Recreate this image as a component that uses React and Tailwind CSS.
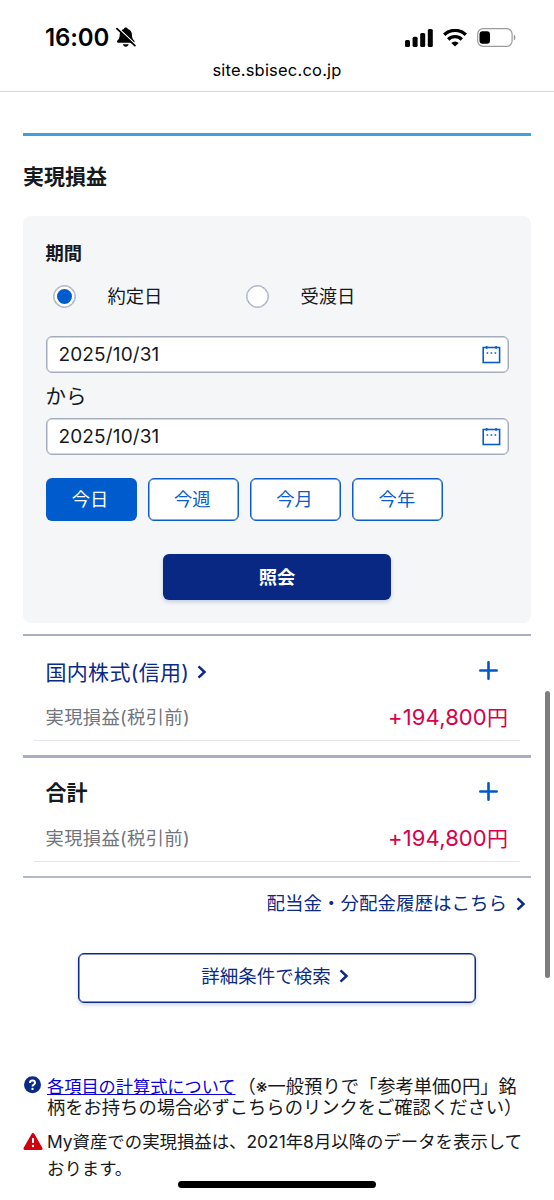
import React from "react";

const JP = "font-['Inter','Noto_Sans_CJK_JP',sans-serif]";

function MutedBell() {
  return (
    <svg className="h-[21px] w-5" viewBox="0 0 20 21">
      <path
        d="M9.800 .6c1 0 1.700.6 1.900 1.400 2.700.8 4.200 2.900 4.200 5.600 0 3.300.8 4.600 2.200 5.900.9.9.5 2.200-.8 2.200H2.200c-1.300 0-1.700-1.300-.8-2.200C2.900 12.200 3.700 10.900 3.700 7.600 3.700 4.900 5.200 2.800 7.900 2 8.100 1.200 8.800.6 9.800.6z"
        fill="#000"
      />
      <path d="M7 17.200h5.600c-.2 1.600-1.300 2.500-2.800 2.500S7.200 18.800 7 17.200z" fill="#000" />
      <path d="M2 .8L19.800 17.800" stroke="#fff" strokeWidth="1.300" />
      <path d="M.9 1.700L18.900 18.700" stroke="#000" strokeWidth="1.700" strokeLinecap="round" />
    </svg>
  );
}

function Signal() {
  return (
    <svg className="h-[18px] w-7" viewBox="0 0 28 18" fill="#000">
      <rect x="0" y="11" width="5" height="7" rx="1.500" />
      <rect x="7.600" y="7.800" width="5" height="10.200" rx="1.500" />
      <rect x="15.200" y="4" width="5" height="14" rx="1.500" />
      <rect x="22.800" y="0" width="5" height="18" rx="1.500" />
    </svg>
  );
}

function Wifi() {
  return (
    <svg className="h-[18px] w-6" viewBox="0 0 24 18" fill="none" stroke="#000" strokeWidth="3.300">
      <path d="M1.200 5.800a15.400 15.400 0 0 1 21.600 0" />
      <path d="M5.200 10.500a9.700 9.700 0 0 1 13.600 0" />
      <path d="M12 17.400l-3.700-3.500a5.300 5.300 0 0 1 7.400 0z" fill="#000" stroke="none" />
    </svg>
  );
}

function Battery() {
  return (
    <svg className="h-[19px] w-[39px]" viewBox="0 0 39 19">
      <rect x=".7" y=".7" width="34.400" height="17.600" rx="5.300" fill="none" stroke="#9b9b9b" strokeWidth="1.200" />
      <rect x="2.500" y="3.200" width="10.500" height="12.600" rx="3" fill="#000" />
      <path d="M36.800 6.500c2.200 1 2.200 5 0 6z" fill="#9b9b9b" />
    </svg>
  );
}

function Chevron({ className }) {
  return (
    <svg className={className} viewBox="0 0 10 14" fill="none" stroke="#0a2a86" strokeWidth="2.500">
      <path d="M1.500 1.300L7.500 7l-6 5.700" />
    </svg>
  );
}

function Calendar() {
  return (
    <svg className="h-[19px] w-[19px]" viewBox="0 0 19 19" fill="none" stroke="#0b5cc8" strokeWidth="1.600">
      <rect x="1.200" y="2.500" width="16.400" height="15" />
      <path d="M4.700 .9v2.800M14.100 .9v2.800" />
      <path d="M4.600 8h1.600M8.600 8h1.600M12.600 8h1.600" />
    </svg>
  );
}

function Plus() {
  return (
    <svg className="mb-[3px] h-[19px] w-[19px]" viewBox="0 0 19 19" stroke="#0058c8" strokeWidth="2.600" strokeLinecap="round">
      <path d="M9.500 1.300v16.400M1.300 9.500h16.400" />
    </svg>
  );
}

function DateField() {
  return (
    <div className="flex h-[37px] w-[463px] items-center justify-between rounded-md border border-[#a5adbd] bg-white pl-3 pr-[7px] shadow-[inset_0_0_0_0.5px_#a5adbd]">
      <span className="text-[19px] leading-none tracking-[0.140px]">2025/10/31</span>
      <Calendar />
    </div>
  );
}

function Radio({ checked, label }) {
  return (
    <label className="flex w-[193px] items-center">
      <span className="flex h-[23px] w-[23px] items-center justify-center rounded-full border border-[#a5adc4] bg-white shadow-[inset_0_0_0_0.5px_#a5adc4]">
        {checked && <span className="h-[15px] w-[15px] rounded-full bg-[#005ccd]" />}
      </span>
      <span className="ml-8 text-[18.300px]">{label}</span>
    </label>
  );
}

function RangeButton({ children }) {
  return (
    <button className="h-[43px] w-[91px] rounded-md border border-[#0b5cc8] bg-white pr-0.5 shadow-[inset_0_0_0_0.5px_#0b5cc8]">
      {children}
    </button>
  );
}

function ResultBlock({ title, link }) {
  return (
    <section className="flex flex-col px-[11px]">
      <div className="flex h-[70px] items-center justify-between pr-[22px] pl-[11.500px]">
        {link ? (
          <a className="flex items-center text-[21px] tracking-[0.300px] text-[#0a2a86]">
            {title}
            <Chevron className="ml-2 h-3.5 w-2.5" />
          </a>
        ) : (
          <h2 className="pb-0.5 text-[21px] font-bold">{title}</h2>
        )}
        <Plus />
      </div>
      <div className="flex h-[34px] items-start justify-between border-b border-[#e3e6ea] pr-3 pl-[11.500px]">
        <span className="text-[18.300px] leading-[20px] tracking-[0.350px] text-[#70757d]">実現損益(税引前)</span>
        <span className="text-[22px] leading-[20px] tracking-[0.120px] text-[#d9004c]">
          +194,800<span className="text-[21px]">円</span>
        </span>
      </div>
    </section>
  );
}

export default function App() {
  return (
    <div className={`relative h-[1200px] w-[554px] overflow-hidden bg-white leading-none whitespace-nowrap text-[#16191d] ${JP}`}>
      <header className="h-[92px] border-b border-[#d8d8d9] text-black">
        <div className="flex h-[60px] items-start justify-between pt-[27px] pl-[45px] pr-[38px]">
          <div className="flex items-center gap-[7px]">
            <span className="pt-px text-[24px] leading-5 font-semibold tracking-[-0.100px]">16:00</span>
            <MutedBell />
          </div>
          <div className="flex items-center gap-2.5 pt-px">
            <Signal />
            <Wifi />
            <Battery />
          </div>
        </div>
        <div className="text-center text-[16.500px] leading-5 tracking-[0.200px]">site.sbisec.co.jp</div>
      </header>

      <main className="flex flex-col px-[23px] pt-[41px]">
        <div className="h-[3px] bg-[#419fd9]" />
        <h1 className="flex h-20 items-center text-[21px] font-bold">実現損益</h1>

        <section className="flex h-[407px] flex-col rounded-lg bg-[#f4f6f8] pt-[27px] pl-[22.500px]">
          <h2 className="text-[18.300px] leading-5 font-bold">期間</h2>
          <div className="flex h-[73px] items-center pb-1.5 pl-[7px]">
            <Radio checked label="約定日" />
            <Radio label="受渡日" />
          </div>
          <DateField />
          <div className="flex h-[45px] items-center pt-1 text-[20.500px]">から</div>
          <DateField />
          <div className="mt-[22.500px] flex gap-[11.300px] text-[18.300px] text-[#0b5cc8]">
            <button className="h-[43px] w-[91px] rounded-md bg-[#005ccd] pr-0.5 text-white">今日</button>
            <RangeButton>今週</RangeButton>
            <RangeButton>今月</RangeButton>
            <RangeButton>今年</RangeButton>
          </div>
          <button className="mt-[33.500px] ml-[117.500px] h-[46px] w-[228px] rounded-md bg-[#082883] text-[18.300px] font-bold text-white shadow-[0_2px_4px_rgba(8,40,131,0.2)]">
            照会
          </button>
        </section>

        <div className="mt-[11px] mb-px h-[2px] bg-[#a9b1bf]" />
        <ResultBlock title="国内株式(信用)" link />
        <div className="mt-[14px] h-[3px] bg-[#a8aec3]" />
        <ResultBlock title="合計" />
        <div className="mt-[14px] h-[2px] bg-[#b3bac7]" />

        <a className="flex h-[51px] items-center justify-end pr-[5px] text-[18.500px] text-[#0a2a86]">
          配当金・分配金履歴はこちら
          <Chevron className="ml-[9px] h-3.5 w-2.5" />
        </a>
        <button className="mx-auto mt-[24px] flex h-[50px] w-[398px] items-center justify-center rounded-md border border-[#0a2a86] bg-white pr-1 pb-1 text-[18.500px] text-[#0a2a86] shadow-[inset_0_0_0_0.5px_#0a2a86,0_2px_4px_rgba(8,40,131,0.2)]">
          詳細条件で検索
          <Chevron className="ml-2 h-3.5 w-2.5" />
        </button>

        <div className="mt-[73px] flex">
          <svg className="mr-1.5 h-[18px] w-[18px]" viewBox="0 0 18 18">
            <circle cx="9.500" cy="8.800" r="8.500" fill="#0a2a86" />
            <path d="M7 6.900C7 3.700 12 3.700 12 6.900c0 1.800-2.500 1.700-2.500 3.500" fill="none" stroke="#fff" strokeWidth="2" />
            <circle cx="9.500" cy="12.900" r="1.200" fill="#fff" />
          </svg>
          <p className="text-[18.300px] leading-[20px]">
            <a className="text-[17.200px] text-[#0a00d8] underline">各項目の計算式について</a>
            <span className="ml-0.5">（※一般預りで「参考単価0円」銘</span>
            <br />
            <span>柄をお持ちの場合必ずこちらのリンクをご確認ください）</span>
          </p>
        </div>
        <div className="mt-[11px] flex">
          <svg className="mr-1 mt-1 h-[19px] w-5" viewBox="0 0 20 19">
            <path d="M10 2.500L18 16.500H2z" fill="#d0000c" stroke="#d0000c" strokeWidth="3" strokeLinejoin="round" />
            <path d="M10 6v5" stroke="#fff" strokeWidth="2" />
            <circle cx="10" cy="14" r="1.200" fill="#fff" />
          </svg>
          <p className="text-[17.400px] leading-[27px]">
            My資産での実現損益は、2021年8月以降のデータを表示して
            <br />
            おります。
          </p>
        </div>
      </main>

      <div className="absolute top-[691px] left-[545px] h-[287px] w-[5px] rounded-full bg-[#7d7d7d]" />
      <div className="absolute top-[1181px] left-[178px] h-[7px] w-[198px] rounded-full bg-black" />
    </div>
  );
}
